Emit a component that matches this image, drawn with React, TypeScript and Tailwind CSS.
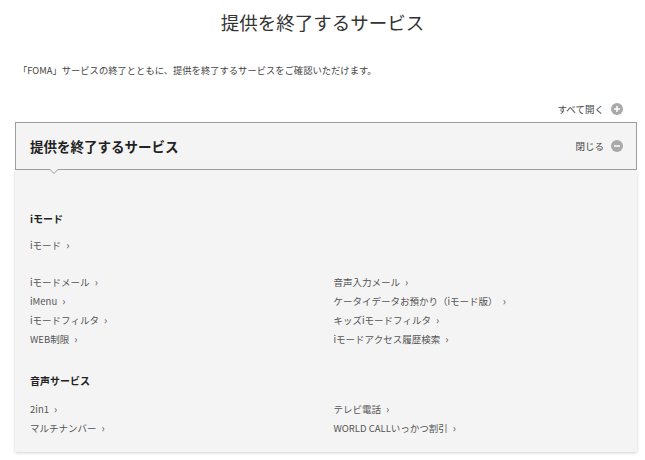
import React from "react";

const font = { fontFamily: '"Noto Sans CJK JP", "Noto Sans", sans-serif' };

function CircleIcon({ minus }: { minus?: boolean }) {
  return (
    <svg width="12" height="12" viewBox="0 0 12 12" className="shrink-0">
      <circle cx="6" cy="6" r="6" fill="#a9a9a9" />
      <rect x="3" y="5.25" width="6" height="1.5" fill="#fff" />
      {!minus && <rect x="5.25" y="3" width="1.5" height="6" fill="#fff" />}
    </svg>
  );
}

function Link({ label }: { label: string }) {
  return (
    <div className="h-[19px] text-[9.5px] leading-[19px] text-[#555]">
      {label}
      <span className="ml-[5px] text-[10.5px] leading-none text-[#555]">›</span>
    </div>
  );
}

export default function App() {
  const left1 = ["iモードメール", "iMenu", "iモードフィルタ", "WEB制限"];
  const right1 = ["音声入力メール", "ケータイデータお預かり（iモード版）", "キッズiモードフィルタ", "iモードアクセス履歴検索"];
  const left2 = ["2in1", "マルチナンバー"];
  const right2 = ["テレビ電話", "WORLD CALLいっかつ割引"];
  return (
    <div className="w-[645px] h-[460px] bg-white overflow-hidden" style={font}>
      <h1 className="pt-[9px] text-center text-[18.5px] leading-[27px] text-[#333]">提供を終了するサービス</h1>
      <p className="mt-[27px] pl-[18px] text-[9.3px] leading-[14px] text-[#444]">
        「FOMA」サービスの終了とともに、提供を終了するサービスをご確認いただけます。
      </p>
      <div className="mt-[25px] flex items-center justify-end gap-[7px] pr-[22px] text-[9.5px] leading-[14px] text-[#444]">
        <span>すべて開く</span>
        <CircleIcon />
      </div>
      <div className="ml-[15px] mr-[8px] mt-[6px]">
        <div className="relative flex h-[48px] items-center justify-between border border-[#9d9d9d] bg-[#f4f4f4] pl-[14px] pr-[13px]">
          <span className="text-[13.5px] font-bold text-[#222]">提供を終了するサービス</span>
          <div className="flex items-center gap-[7px] text-[9.5px] text-[#444]">
            <span>閉じる</span>
            <CircleIcon minus />
          </div>
          <div className="absolute left-[33px] top-full h-0 w-0 border-x-[5px] border-t-[5px] border-x-transparent border-t-[#9d9d9d]" />
          <div className="absolute left-[34px] top-full h-0 w-0 border-x-[4px] border-t-[4px] border-x-transparent border-t-[#f4f4f4]" />
        </div>
        <div className="bg-[#f4f4f4] pl-[15px] pt-[42px] pb-[14px] shadow-[0_1px_3px_rgba(0,0,0,0.18)]">
          <div className="text-[10px] font-bold leading-[14px] text-[#222]">iモード</div>
          <div className="mt-[10px]">
            <Link label="iモード" />
          </div>
          <div className="mt-[18px] grid grid-cols-2">
            <div>
              {left1.map((l) => (
                <Link key={l} label={l} />
              ))}
            </div>
            <div>
              {right1.map((l) => (
                <Link key={l} label={l} />
              ))}
            </div>
          </div>
          <div className="mt-[25px] text-[10px] font-bold leading-[14px] text-[#222]">音声サービス</div>
          <div className="mt-[12px] grid grid-cols-2">
            <div>
              {left2.map((l) => (
                <Link key={l} label={l} />
              ))}
            </div>
            <div>
              {right2.map((l) => (
                <Link key={l} label={l} />
              ))}
            </div>
          </div>
        </div>
      </div>
    </div>
  );
}
